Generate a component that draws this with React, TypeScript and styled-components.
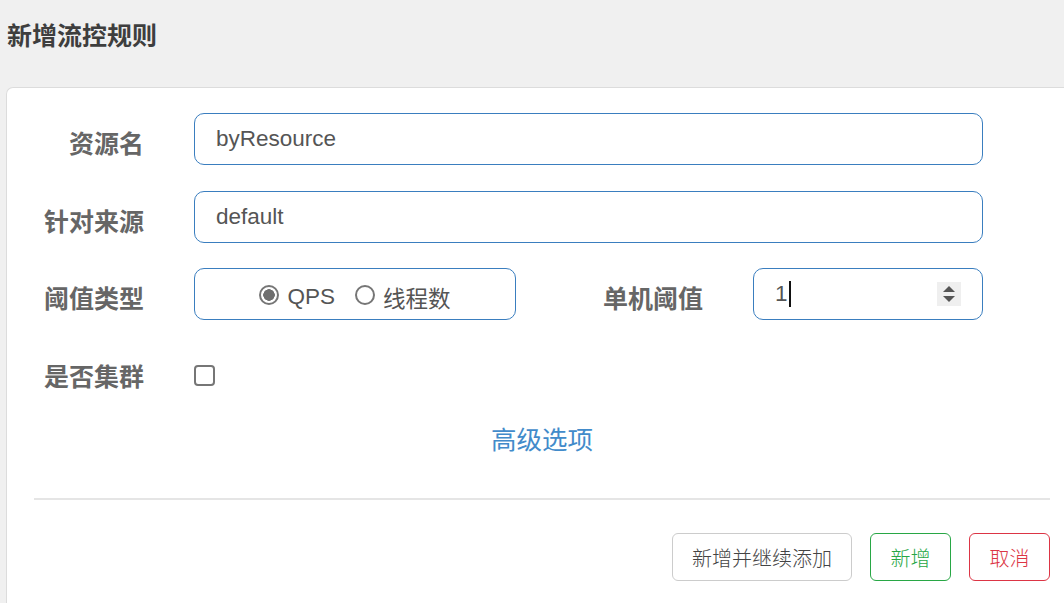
import styled, { createGlobalStyle } from 'styled-components';

const GlobalStyle = createGlobalStyle`
  html, body {
    margin: 0;
    padding: 0;
    overflow: hidden;
    background: #f0f0f0;
  }

  body {
    font-family: "Liberation Sans", "Noto Sans CJK SC", sans-serif;
  }
`;

const Page = styled.div`
  width: 1064px;
  height: 603px;
  overflow: hidden;
`;

const Header = styled.h1`
  margin: 0;
  padding: 17px 7px 0;
  height: 35px;
  line-height: 35px;
  font-size: 25px;
  font-weight: 700;
  color: #3e3e3e;
  font-family: "Noto Sans CJK SC", sans-serif;
`;

const Card = styled.div`
  margin: 35px 0 0 6px;
  width: 1071px;
  height: 600px;
  box-sizing: border-box;
  padding-top: 25px;
  background: #fff;
  border: 1px solid #dcdcdc;
  border-right: none;
  border-radius: 7px 0 0 0;
`;

const Row = styled.div`
  display: flex;
  align-items: center;
  height: 52px;
  margin-bottom: 25.5px;
`;

type LabelProps = {
  $width: number;
};

const Label = styled.label<LabelProps>`
  width: ${({ $width }) => $width}px;
  margin-top: 6px;
  margin-right: 50px;
  text-align: right;
  font-family: "Noto Sans CJK SC", sans-serif;
  font-size: 25px;
  font-weight: 700;
  color: #666;
  flex-shrink: 0;
`;

type FieldProps = {
  $width: number;
};

const Field = styled.div<FieldProps>`
  width: ${({ $width }) => $width}px;
  height: 52px;
  box-sizing: border-box;
  display: flex;
  align-items: center;
  padding: 0 21px;
  border: 1px solid #3a7ebf;
  border-radius: 10px;
  font-size: 22.5px;
  color: #555;
`;

const RadioGroup = styled(Field)`
  justify-content: center;
  padding-top: 5px;
`;

const RadioOption = styled.span`
  display: inline-flex;
  align-items: center;
  gap: 8px;
  margin-right: 20px;
  font-family: "Liberation Sans", "Noto Sans CJK SC", sans-serif;

  &:last-child {
    margin-right: 0;
  }
`;

type RadioProps = {
  $checked: boolean;
};

const RadioDot = styled.span<RadioProps>`
  width: 20px;
  height: 20px;
  box-sizing: border-box;
  border-radius: 50%;
  border: 2px solid #767676;
  background: ${({ $checked }) => ($checked ? 'radial-gradient(circle, #6f6f6f 0 5.5px, #fff 6px)' : '#fff')};
  margin-top: -4px;
`;

const Caret = styled.span`
  display: inline-block;
  width: 2px;
  height: 26px;
  background: #111;
  margin-left: 1px;
`;

const Spinner = styled.span`
  margin-left: auto;
  width: 24px;
  height: 24px;
  background: #efefef;
  display: flex;
  align-items: center;
  justify-content: center;
`;

const Checkbox = styled.span`
  width: 21px;
  height: 21px;
  box-sizing: border-box;
  border: 2px solid #767676;
  border-radius: 4px;
  margin-top: 7px;
`;

const AdvancedLink = styled.a`
  display: block;
  text-align: center;
  line-height: 30px;
  font-family: "Noto Sans CJK SC", sans-serif;
  font-size: 25.5px;
  color: #428bca;
  text-decoration: none;
  cursor: pointer;
`;

const Divider = styled.hr`
  margin: 45px 27px 0;
  border: none;
  height: 2px;
  background: #e5e5e5;
`;

const Footer = styled.div`
  display: flex;
  justify-content: flex-end;
  gap: 18px;
  margin: 33px 27px 0;
`;

type ButtonProps = {
  $tone: 'default' | 'success' | 'danger';
};

const toneColor = {
  default: { border: '#ccc', text: '#444' },
  success: { border: '#28a745', text: '#28a745' },
  danger: { border: '#dc3545', text: '#dc3545' },
};

const Button = styled.button<ButtonProps>`
  height: 48px;
  padding: 0 19px;
  min-width: 81px;
  box-sizing: border-box;
  background: #fff;
  border: 1px solid ${({ $tone }) => toneColor[$tone].border};
  color: ${({ $tone }) => toneColor[$tone].text};
  border-radius: 6px;
  font-family: "Noto Sans CJK SC", sans-serif;
  font-size: 20px;
  font-weight: 300;
  cursor: pointer;
`;

export default function App() {
  return (
    <Page>
      <GlobalStyle />
      <Header>新增流控规则</Header>
      <Card>
        <Row>
          <Label $width={137}>资源名</Label>
          <Field $width={789}>byResource</Field>
        </Row>
        <Row>
          <Label $width={137}>针对来源</Label>
          <Field $width={789}>default</Field>
        </Row>
        <Row>
          <Label $width={137}>阈值类型</Label>
          <RadioGroup $width={322}>
            <RadioOption>
              <RadioDot $checked />
              QPS
            </RadioOption>
            <RadioOption>
              <RadioDot $checked={false} />
              线程数
            </RadioOption>
          </RadioGroup>
          <Label $width={187}>单机阈值</Label>
          <Field $width={230}>
            1
            <Caret />
            <Spinner>
              <svg width="14" height="18" viewBox="0 0 14 18">
                <path d="M7 1 L13 7 L1 7 Z" fill="#555" />
                <path d="M1 11 L13 11 L7 17 Z" fill="#555" />
              </svg>
            </Spinner>
          </Field>
        </Row>
        <Row>
          <Label $width={137}>是否集群</Label>
          <Checkbox />
        </Row>
        <AdvancedLink>高级选项</AdvancedLink>
        <Divider />
        <Footer>
          <Button $tone="default">新增并继续添加</Button>
          <Button $tone="success">新增</Button>
          <Button $tone="danger">取消</Button>
        </Footer>
      </Card>
    </Page>
  );
}
